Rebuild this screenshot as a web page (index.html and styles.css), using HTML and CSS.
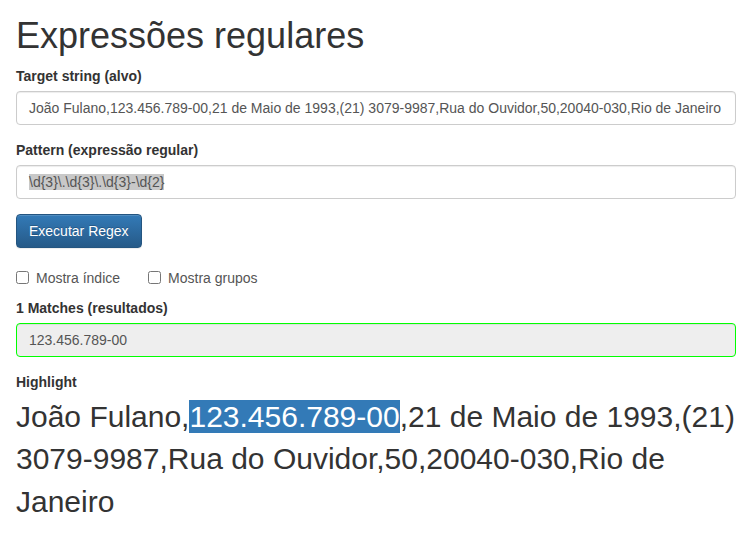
FILE: index.html
```html
<!DOCTYPE html>
<html lang="pt">
<head>
<meta charset="utf-8">
<title>Expressões regulares</title>
<link rel="stylesheet" href="styles.css">
</head>
<body>
<div class="container">
  <h1 class="title">Expressões regulares</h1>

  <div class="form-group">
    <label class="field-label">Target string (alvo)</label>
    <div class="form-control">João Fulano,123.456.789-00,21 de Maio de 1993,(21) 3079-9987,Rua do Ouvidor,50,20040-030,Rio de Janeiro</div>
  </div>

  <div class="form-group">
    <label class="field-label">Pattern (expressão regular)</label>
    <div class="form-control"><span class="selected">\d{3}\.\d{3}\.\d{3}-\d{2}</span></div>
  </div>

  <div class="actions">
    <button class="btn-primary" type="button">Executar Regex</button>
  </div>

  <div class="checks">
    <label class="check"><input type="checkbox" class="check-box"> Mostra índice</label>
    <label class="check"><input type="checkbox" class="check-box"> Mostra grupos</label>
  </div>

  <div class="form-group">
    <label class="field-label">1 Matches (resultados)</label>
    <div class="form-control readonly success">123.456.789-00</div>
  </div>

  <div class="highlight-group">
    <label class="field-label">Highlight</label>
    <div class="highlight">João Fulano,<span class="mark">123.456.789-00</span>,21 de Maio de 1993,(21) 3079-9987,Rua do Ouvidor,50,20040-030,Rio de Janeiro</div>
  </div>
</div>
</body>
</html>
```

FILE: styles.css
```css
* {
  box-sizing: border-box;
}

body {
  margin: 0;
  font-family: "Liberation Sans", Arial, Helvetica, sans-serif;
  font-size: 14px;
  line-height: 1.42857143;
  color: #333;
  background: #fff;
}

.container {
  padding: 0 18px 0 16px;
}

.title {
  font-size: 36px;
  font-weight: 500;
  line-height: 1.1;
  margin: 16px 0 10px;
  color: #333;
}

.form-group {
  margin-bottom: 15px;
}

.field-label {
  display: block;
  font-weight: bold;
  margin-bottom: 5px;
  color: #333;
}

.form-control {
  height: 34px;
  padding: 6px 12px;
  line-height: 20px;
  color: #555;
  background: #fff;
  border: 1px solid #ccc;
  border-radius: 4px;
  box-shadow: inset 0 1px 1px rgba(0, 0, 0, .075);
  white-space: nowrap;
  overflow: hidden;
}

.form-control.readonly {
  background: #eee;
}

.form-control.success {
  border-color: #00ff00;
}

.selected {
  background: #c8c8c8;
}

.actions {
  margin-bottom: 20px;
}

.btn-primary {
  display: inline-block;
  height: 34px;
  padding: 6px 12px;
  font-family: inherit;
  font-size: 14px;
  line-height: 20px;
  color: #fff;
  background-image: linear-gradient(to bottom, #337ab7 0, #265a88 100%);
  border: 1px solid #245580;
  border-radius: 4px;
  text-shadow: 0 -1px 0 rgba(0, 0, 0, .2);
  box-shadow: inset 0 1px 0 rgba(255, 255, 255, .15), 0 1px 1px rgba(0, 0, 0, .075);
  cursor: pointer;
}

.checks {
  display: flex;
  gap: 28px;
  margin: 0 0 10px;
  height: 20px;
  align-items: center;
}

.check {
  display: flex;
  align-items: center;
  color: #555;
  font-weight: normal;
}

.check-box {
  width: 13px;
  height: 13px;
  margin: 0 7px 0 0;
}

.highlight-group .field-label {
  margin-bottom: 4px;
}

.highlight {
  font-size: 30px;
  line-height: 1.42857143;
  color: #333;
}

.mark {
  background: #337ab7;
  color: #fff;
}
```
